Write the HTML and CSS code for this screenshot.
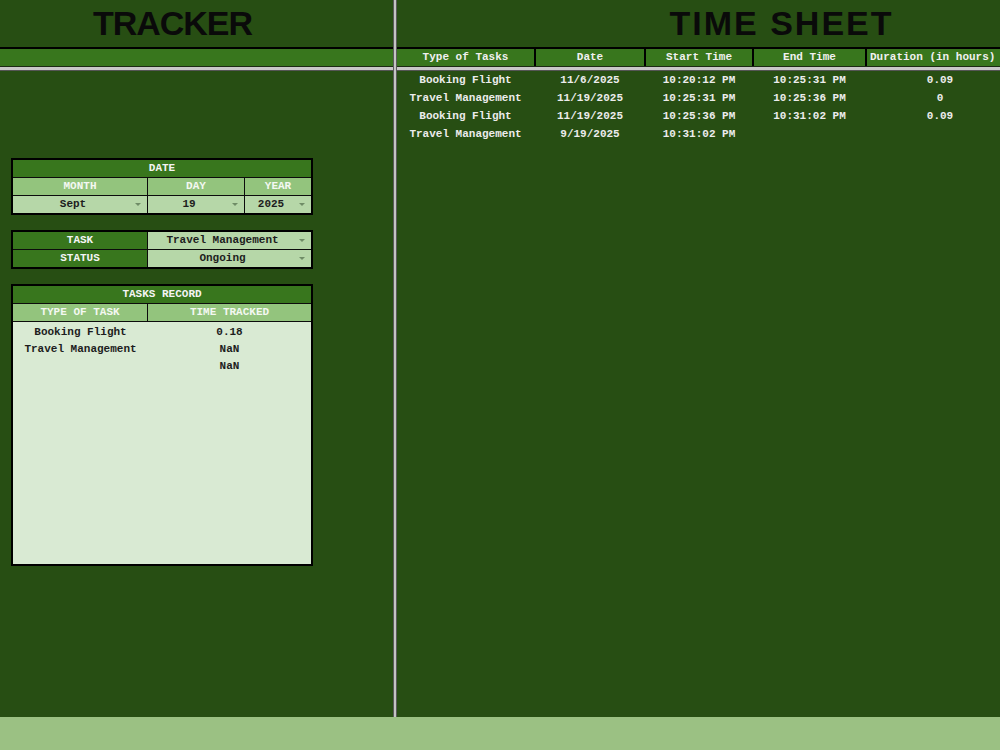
FILE: index.html
```html
<!DOCTYPE html>
<html lang="en">
<head>
<meta charset="utf-8">
<title>Tracker / Time Sheet</title>
<link rel="stylesheet" href="styles.css">
</head>
<body>
<div class="sheet">
  <section class="pane pane-left">
    <h1 class="title title-tracker">TRACKER</h1>
    <div class="band"></div>
    <div class="rule"></div>
    <div class="left-body">
      <div class="tbl tbl-date">
        <div class="c hd span3">DATE</div>
        <div class="c sub">MONTH</div>
        <div class="c sub">DAY</div>
        <div class="c sub">YEAR</div>
        <div class="c val dd">Sept</div>
        <div class="c val dd">19</div>
        <div class="c val dd">2025</div>
      </div>
      <div class="tbl tbl-task">
        <div class="c hd">TASK</div>
        <div class="c val dd">Travel Management</div>
        <div class="c hd">STATUS</div>
        <div class="c val dd">Ongoing</div>
      </div>
      <div class="tbl tbl-record">
        <div class="c hd span2">TASKS RECORD</div>
        <div class="c sub">TYPE OF TASK</div>
        <div class="c sub">TIME TRACKED</div>
        <div class="record-body span2">
          <div class="rec">Booking Flight</div><div class="rec">0.18</div>
          <div class="rec">Travel Management</div><div class="rec">NaN</div>
          <div class="rec"></div><div class="rec">NaN</div>
        </div>
      </div>
    </div>
  </section>
  <div class="divider"></div>
  <section class="pane pane-right">
    <h1 class="title title-sheet">TIME SHEET</h1>
    <div class="band cols">
      <div class="hcell">Type of Tasks</div>
      <div class="hcell">Date</div>
      <div class="hcell">Start Time</div>
      <div class="hcell">End Time</div>
      <div class="hcell hcell-last">Duration (in hours)</div>
    </div>
    <div class="rule"></div>
    <div class="rows">
      <div class="row cols-plain"><div>Booking Flight</div><div>11/6/2025</div><div>10:20:12 PM</div><div>10:25:31 PM</div><div>0.09</div></div>
      <div class="row cols-plain"><div>Travel Management</div><div>11/19/2025</div><div>10:25:31 PM</div><div>10:25:36 PM</div><div>0</div></div>
      <div class="row cols-plain"><div>Booking Flight</div><div>11/19/2025</div><div>10:25:36 PM</div><div>10:31:02 PM</div><div>0.09</div></div>
      <div class="row cols-plain"><div>Travel Management</div><div>9/19/2025</div><div>10:31:02 PM</div><div></div><div></div></div>
    </div>
  </section>
</div>
<footer class="tabbar"></footer>
</body>
</html>
```

FILE: styles.css
```css
* { box-sizing: border-box; }

html, body {
  margin: 0;
  padding: 0;
}

body {
  width: 1000px;
  height: 750px;
  overflow: hidden;
  background: #274e13;
  font-family: "Liberation Mono", "Courier New", monospace;
  font-weight: bold;
  font-size: 11px;
  color: #ececec;
}

/* two panes split by a thick grey column line */
.sheet {
  display: grid;
  grid-template-columns: 393px 4px 603px;
  height: 717px;
}

.pane {
  display: flex;
  flex-direction: column;
  overflow: hidden;
  min-width: 0;
}

.divider {
  background: #c4c4c4;
  border-left: 1px solid #5a5a5a;
  border-right: 1px solid #5a5a5a;
}

.title {
  margin: 0;
  height: 47px;
  line-height: 47px;
  font-family: "Liberation Sans", Arial, sans-serif;
  font-weight: bold;
  font-size: 34px;
  color: #0a0a0a;
  text-align: center;
  white-space: nowrap;
}

.title-tracker {
  padding-right: 48px;
  letter-spacing: -1px;
}

.title-sheet {
  padding-left: 166px;
  letter-spacing: 2px;
}

/* header band under the titles */
.band {
  height: 20px;
  background: #38761d;
  border-top: 2px solid #000;
  border-bottom: 1px solid #1c2a14;
  flex: none;
}

.rule {
  height: 4px;
  flex: none;
  background: #c8c8c8;
  border-bottom: 1px solid #555;
}

.cols,
.cols-plain {
  display: grid;
  grid-template-columns: 137px 108px 106px 111px 146px;
  column-gap: 2px;
  width: 616px;
}

.cols {
  background: #000;
}

.hcell {
  background: #38761d;
  text-align: center;
  line-height: 17px;
  white-space: nowrap;
  overflow: hidden;
  color: #f0f0f0;
}

.hcell-last {
  text-align: left;
  padding-left: 3px;
}

.rows {
  display: flex;
  flex-direction: column;
}

.row {
  height: 18px;
  line-height: 18px;
  text-align: center;
  white-space: nowrap;
  color: #ececec;
}

/* left-hand input tables */
.left-body {
  display: flex;
  flex-direction: column;
  gap: 15px;
  padding: 87px 0 0 11px;
}

.tbl {
  display: grid;
  width: 302px;
  gap: 1px;
  background: #0c0c0c;
  border: 2px solid #000;
}

.tbl-date {
  grid-template-columns: 134px 96px 66px;
  grid-auto-rows: 17px;
}

.tbl-task {
  grid-template-columns: 134px 163px;
  grid-auto-rows: 17px;
}

.tbl-record {
  grid-template-columns: 134px 163px;
  grid-template-rows: 17px 17px 242px;
}

.span2 { grid-column: span 2; }
.span3 { grid-column: span 3; }

.c {
  position: relative;
  text-align: center;
  line-height: 17px;
  white-space: nowrap;
  overflow: hidden;
}

.hd {
  background: #38761d;
  color: #f4f4f4;
}

.sub {
  background: #93c47d;
  color: #f4f8f2;
}

.val {
  background: #b6d7a8;
  color: #1d1d1d;
}

/* dropdown chip: text sits left of the arrow */
.dd {
  padding-right: 14px;
}

.dd::after {
  content: "";
  position: absolute;
  right: 6px;
  top: 7px;
  border-left: 3px solid transparent;
  border-right: 3px solid transparent;
  border-top: 3px solid #6f8c66;
}

.record-body {
  background: #d9ead3;
  display: grid;
  grid-template-columns: 135px 163px;
  grid-auto-rows: 17px;
  align-content: start;
  padding-top: 2px;
}

.rec {
  text-align: center;
  line-height: 17px;
  color: #1d1d1d;
  white-space: nowrap;
}

.tabbar {
  height: 33px;
  background: #9bc183;
}
```
